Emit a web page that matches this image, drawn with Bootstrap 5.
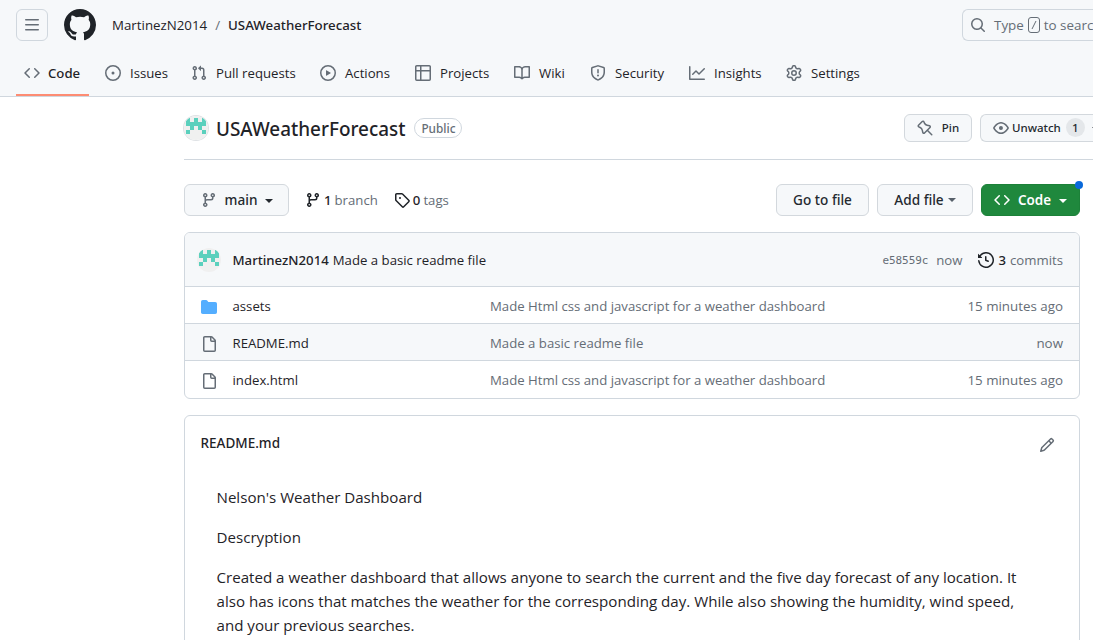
<!DOCTYPE html>
<html lang="en">
<head>
<meta charset="utf-8">
<meta name="viewport" content="width=device-width, initial-scale=1">
<title>MartinezN2014/USAWeatherForecast</title>
<link href="https://cdn.jsdelivr.net/npm/bootstrap@5.3.0/dist/css/bootstrap.min.css" rel="stylesheet">
<style>
  :root { --ink: #1f2328; --soft: #656d76; --line: #d0d7de; --canvas: #f6f8fa; }
  body { font-family: "Open Sans", "Noto Sans", sans-serif; font-size: 13.2px; line-height: 20px; color: var(--ink); height: 640px; overflow: hidden; }
  .oct { width: 16px; height: 16px; fill: currentColor; flex: none; display: block; }
  .soft { color: var(--soft); }
  .semi { font-family: "Noto Sans", sans-serif; font-weight: 500; }
  .line { border-color: var(--line) !important; }
  .canvas { background: var(--canvas); }

  .app-top { height: 97px; }
  .app-bar { height: 49px; padding: 9px 0 8px 16px; }
  .sq-btn { width: 32px; height: 32px; border-radius: 6px; }
  .crumb { font-size: 13.3px; }
  .search-box { width: 131px; height: 32px; padding-left: 7px; border-radius: 6px 0 0 6px; font-size: 13.4px; white-space: nowrap; overflow: hidden; }
  .slash { width: 12px; height: 16px; border: 1px solid var(--soft); border-radius: 3px; margin: 0 4px 0 4px; flex: none; }

  .repo-tabs { height: 47px; padding-left: 16px; gap: 8px; }
  .repo-tabs .nav-item { height: 47px; }
  .repo-tabs .nav-link { height: 47px; padding: 0 8px; gap: 9px; color: var(--ink); white-space: nowrap; }
  .repo-tabs .oct { color: var(--soft); }
  .repo-tabs .active { box-shadow: inset 0 -2px #fd8c73; border-radius: 0; gap: 8px; }
  .repo-tabs li:nth-child(1) { width: 73px; }
  .repo-tabs li:nth-child(2) { width: 78px; }
  .repo-tabs li:nth-child(3) { width: 121px; }
  .repo-tabs li:nth-child(4) { width: 87px; }
  .repo-tabs li:nth-child(5) { width: 91px; }
  .repo-tabs li:nth-child(6) { width: 68px; }
  .repo-tabs li:nth-child(7) { width: 91px; }
  .repo-tabs li:nth-child(8) { width: 89px; }

  .page { margin-left: 184px; }
  .repo-head { height: 63px; padding-bottom: 1px; }
  .repo-name { font-size: 18.9px; line-height: 30px; margin: 2px 0 0 8px; }
  .pill { height: 20px; line-height: 18px; font-size: 11.8px; padding: 0 6px; margin-left: 9px; border-radius: 10px; margin-top: 1px; }
  .face { width: 24px; height: 24px; border-radius: 50%; flex: none; display: block; }
  .ringed { box-shadow: 0 0 0 1px #dfe2e5; }
  .gh-btn { --bs-btn-color: #24292f; --bs-btn-bg: #f6f8fa; --bs-btn-border-color: #d3d8dd; --bs-btn-border-radius: 6px; --bs-btn-padding-y: 0; --bs-btn-padding-x: 0;
    --bs-btn-font-size: 13.6px; --bs-btn-line-height: 20px; height: 32px; display: flex; align-items: center; justify-content: center; white-space: nowrap; font-family: "Noto Sans", sans-serif; font-weight: 500; flex: none; }
  .gh-btn-sm { --bs-btn-font-size: 11.5px; height: 28px; }
  .w-pin { width: 68px; gap: 9px; }
  .w-watch { width: 113px; justify-content: flex-start; padding-left: 12px; margin-left: 8px; border-right: 0; border-radius: 6px 0 0 6px; overflow: hidden; }
  .w-watch .oct { margin-right: 3px; }
  .count { width: 19px; height: 19px; line-height: 19px; border-radius: 50%; background: #e4e7ea; margin-left: 5px; flex: none; }
  .tri { width: 0; height: 0; border: 4.5px solid transparent; border-top-color: currentColor; border-bottom: 0; margin-top: 2px; flex: none; }
  .w-watch .tri { margin-left: 7px; }
  .w-main { width: 105px; gap: 7.5px; color: #24292f; padding-left: 1px; }
  .w-goto { width: 93px; margin-left: auto; }
  .w-add { width: 96px; gap: 4px; margin-left: 8px; }
  .w-add .tri { margin-top: 0; border-top-color: #57606a; }
  .w-code { --bs-btn-bg: #1f883d; --bs-btn-color: #fff; --bs-btn-border-color: #1c8139; width: 99px; gap: 7.5px; margin-left: 8px; font-weight: 600; font-size: 13.4px; }
  .dot { width: 8px; height: 8px; border-radius: 50%; background: #0969da; top: -4px; right: -4px; }

  .tool-row { height: 32px; margin-top: 24px; }
  .refs { gap: 3px; margin-top: -1px; }
  .col-wide { width: 896px; }
  .box { border: 1px solid var(--line); border-radius: 6px; overflow: hidden; background: #fff; }
  .commit-row { height: 53px; padding: 0 16px 0 12px; }
  .author { margin-left: 11.5px; }
  .file-row { height: 37px; border-top: 1px solid var(--line); padding: 2px 16px 0; }
  .file-row:last-child { height: 38px; padding-bottom: 1px; }
  .file-row .oct { margin-top: 1px; }
  .file-row .fname { width: 257.5px; margin-left: 15.5px; }
  .sha { font-family: "DejaVu Sans Mono", monospace; font-size: 11px; letter-spacing: -.1px; margin-top: 2px; }
  .ago { font-size: 13.35px; }
  .readme-head { height: 54px; padding: 0 24px 0 15.5px; }
  .readme-head .semi { font-size: 13.5px; }
  .prose { font-size: 15.12px; line-height: 24px; padding: 15px 31.5px; white-space: nowrap; }
  .prose p { margin: 0 0 16px; }
</style>
</head>
<body>
<svg class="d-none">
  <symbol id="code" viewBox="0 0 16 16"><path d="m11.28 3.22 4.25 4.25a.75.75 0 0 1 0 1.06l-4.25 4.25a.749.749 0 0 1-1.275-.326.749.749 0 0 1 .215-.734L13.94 8l-3.72-3.72a.749.749 0 0 1 .326-1.275.749.749 0 0 1 .734.215Zm-6.56 0a.751.751 0 0 1 1.042.018.751.751 0 0 1 .018 1.042L2.06 8l3.72 3.72a.749.749 0 0 1-.326 1.275.749.749 0 0 1-.734-.215L.47 8.53a.75.75 0 0 1 0-1.06Z"/></symbol>
  <symbol id="branch" viewBox="0 0 16 16"><path d="M9.5 3.25a2.25 2.25 0 1 1 3 2.122V6A2.5 2.5 0 0 1 10 8.5H6a1 1 0 0 0-1 1v1.128a2.251 2.251 0 1 1-1.5 0V5.372a2.25 2.25 0 1 1 1.5 0v1.836A2.493 2.493 0 0 1 6 7h4a1 1 0 0 0 1-1v-.628A2.25 2.25 0 0 1 9.5 3.25Zm-6 0a.75.75 0 1 0 1.5 0 .75.75 0 0 0-1.5 0Zm8.25-.75a.75.75 0 1 0 0 1.5.75.75 0 0 0 0-1.5ZM4.25 12a.75.75 0 1 0 0 1.5.75.75 0 0 0 0-1.5Z"/></symbol>
  <symbol id="file" viewBox="0 0 16 16"><path d="M2 1.75C2 .784 2.784 0 3.75 0h6.586c.464 0 .909.184 1.237.513l2.914 2.914c.329.328.513.773.513 1.237v9.586A1.75 1.75 0 0 1 13.25 16h-9.5A1.75 1.75 0 0 1 2 14.25Zm1.75-.25a.25.25 0 0 0-.25.25v12.5c0 .138.112.25.25.25h9.5a.25.25 0 0 0 .25-.25V6h-2.75A1.75 1.75 0 0 1 9 4.25V1.5Zm6.75.062V4.25c0 .138.112.25.25.25h2.688l-.011-.013-2.914-2.914-.013-.011Z"/></symbol>
  <symbol id="face" viewBox="0 0 24 24"><rect width="24" height="24" fill="#f0f0f0"/><path fill="#5bd0bd" d="M2 2h4v4h4V2h4v4h4V2h4v8h-4v4h-4v-4h-4v4H6v-4H2ZM2 14h4v4H2ZM18 14h4v4h-4Z"/></symbol>
</svg>

<header class="app-top canvas border-bottom line">
  <div class="app-bar d-flex align-items-center">
    <div class="sq-btn border line d-flex align-items-center justify-content-center flex-shrink-0 soft"><svg class="oct" viewBox="0 0 16 16"><path d="M1 2.75A.75.75 0 0 1 1.75 2h12.5a.75.75 0 0 1 0 1.5H1.75A.75.75 0 0 1 1 2.75Zm0 5A.75.75 0 0 1 1.75 7h12.5a.75.75 0 0 1 0 1.5H1.75A.75.75 0 0 1 1 7.75ZM1.75 12h12.5a.75.75 0 0 1 0 1.5H1.75a.75.75 0 0 1 0-1.5Z"/></svg></div>
    <svg class="flex-shrink-0 ms-3 me-3" width="32" height="32" viewBox="0 0 16 16" fill="#1f2328"><path d="M8 0c4.42 0 8 3.58 8 8a8.013 8.013 0 0 1-5.45 7.59c-.4.08-.55-.17-.55-.38 0-.27.01-1.13.01-2.2 0-.75-.25-1.23-.54-1.48 1.78-.2 3.65-.88 3.65-3.95 0-.88-.31-1.59-.82-2.15.08-.2.36-1.02-.08-2.12 0 0-.67-.22-2.2.82-.64-.18-1.32-.27-2-.27-.68 0-1.36.09-2 .27-1.53-1.03-2.2-.82-2.2-.82-.44 1.1-.16 1.92-.08 2.12-.51.56-.82 1.28-.82 2.15 0 3.06 1.86 3.75 3.64 3.95-.23.2-.44.55-.51 1.07-.46.21-1.61.55-2.33-.66-.15-.24-.6-.83-1.23-.82-.67.01-.27.38.01.53.34.19.73.9.82 1.13.16.45.68 1.31 2.69.94 0 .67.01 1.3.01 1.49 0 .21-.15.45-.55.38A7.995 7.995 0 0 1 0 8c0-4.42 3.58-8 8-8Z"/></svg>
    <div class="crumb d-flex"><span>MartinezN2014</span><span class="soft px-2">/</span><span class="semi">USAWeatherForecast</span></div>
    <div class="search-box border border-end-0 line d-flex align-items-center soft flex-shrink-0 ms-auto"><svg class="oct" viewBox="0 0 16 16"><path d="M10.68 11.74a6 6 0 0 1-7.922-8.982 6 6 0 0 1 8.982 7.922l3.04 3.04a.749.749 0 0 1-.326 1.275.749.749 0 0 1-.734-.215ZM11.5 7a4.499 4.499 0 1 0-8.997 0A4.499 4.499 0 0 0 11.5 7Z"/></svg><span class="ms-2">Type</span><svg class="slash" viewBox="0 0 10 14"><path d="M3 11 7 3" stroke="#656d76" fill="none"/></svg><span>to search</span></div>
  </div>
  <ul class="nav repo-tabs flex-nowrap">
    <li class="nav-item"><a class="nav-link active d-flex align-items-center semi"><svg class="oct"><use href="#code"/></svg>Code</a></li>
    <li class="nav-item"><a class="nav-link d-flex align-items-center"><svg class="oct" viewBox="0 0 16 16"><path d="M8 9.5a1.5 1.5 0 1 0 0-3 1.5 1.5 0 0 0 0 3Z"/><path d="M8 0a8 8 0 1 1 0 16A8 8 0 0 1 8 0ZM1.5 8a6.5 6.5 0 1 0 13 0 6.5 6.5 0 0 0-13 0Z"/></svg>Issues</a></li>
    <li class="nav-item"><a class="nav-link d-flex align-items-center"><svg class="oct" viewBox="0 0 16 16"><path d="M1.5 3.25a2.25 2.25 0 1 1 3 2.122v5.256a2.251 2.251 0 1 1-1.5 0V5.372A2.25 2.25 0 0 1 1.5 3.25Zm5.677-.177L9.573.677A.25.25 0 0 1 10 .854V2.5h1A2.5 2.5 0 0 1 13.5 5v5.628a2.251 2.251 0 1 1-1.5 0V5a1 1 0 0 0-1-1h-1v1.646a.25.25 0 0 1-.427.177L7.177 3.427a.25.25 0 0 1 0-.354ZM3.75 2.5a.75.75 0 1 0 0 1.5.75.75 0 0 0 0-1.5Zm0 9.5a.75.75 0 1 0 0 1.5.75.75 0 0 0 0-1.5Zm8.25.75a.75.75 0 1 0 1.5 0 .75.75 0 0 0-1.5 0Z"/></svg>Pull requests</a></li>
    <li class="nav-item"><a class="nav-link d-flex align-items-center"><svg class="oct" viewBox="0 0 16 16"><path d="M8 0a8 8 0 1 1 0 16A8 8 0 0 1 8 0ZM1.5 8a6.5 6.5 0 1 0 13 0 6.5 6.5 0 0 0-13 0Zm4.879-2.773 4.264 2.559a.25.25 0 0 1 0 .428l-4.264 2.559A.25.25 0 0 1 6 10.559V5.442a.25.25 0 0 1 .379-.215Z"/></svg>Actions</a></li>
    <li class="nav-item"><a class="nav-link d-flex align-items-center"><svg class="oct" viewBox="0 0 16 16"><path d="M0 1.75C0 .784.784 0 1.75 0h12.5C15.216 0 16 .784 16 1.75v12.5A1.75 1.75 0 0 1 14.25 16H1.75A1.75 1.75 0 0 1 0 14.25ZM6.5 6.5v8h7.75a.25.25 0 0 0 .25-.25V6.5Zm8-1.5V1.75a.25.25 0 0 0-.25-.25H6.5V5Zm-13 1.5v7.75c0 .138.112.25.25.25H5v-8ZM5 5V1.5H1.75a.25.25 0 0 0-.25.25V5Z"/></svg>Projects</a></li>
    <li class="nav-item"><a class="nav-link d-flex align-items-center"><svg class="oct" viewBox="0 0 16 16"><path d="M0 1.75A.75.75 0 0 1 .75 1h4.253c1.227 0 2.317.59 3 1.501A3.743 3.743 0 0 1 11.006 1h4.245a.75.75 0 0 1 .75.75v10.5a.75.75 0 0 1-.75.75h-4.507a2.25 2.25 0 0 0-1.591.659l-.622.621a.75.75 0 0 1-1.06 0l-.622-.621A2.25 2.25 0 0 0 5.258 13H.75a.75.75 0 0 1-.75-.75Zm7.251 10.324.004-5.073-.002-2.253A2.25 2.25 0 0 0 5.003 2.5H1.5v9h3.757a3.75 3.75 0 0 1 1.994.574ZM8.755 4.75l-.004 7.322a3.752 3.752 0 0 1 1.992-.572H14.5v-9h-3.495a2.25 2.25 0 0 0-2.25 2.25Z"/></svg>Wiki</a></li>
    <li class="nav-item"><a class="nav-link d-flex align-items-center"><svg class="oct" viewBox="0 0 16 16"><path d="M7.467.133a1.748 1.748 0 0 1 1.066 0l5.25 1.68A1.75 1.75 0 0 1 15 3.48V7c0 1.566-.32 3.182-1.303 4.682-.983 1.498-2.585 2.813-5.032 3.855a1.697 1.697 0 0 1-1.33 0c-2.447-1.042-4.049-2.357-5.032-3.855C1.32 10.182 1 8.566 1 7V3.48a1.755 1.755 0 0 1 1.217-1.667Zm.61 1.429a.25.25 0 0 0-.153 0l-5.25 1.68a.25.25 0 0 0-.174.238V7c0 1.358.275 2.666 1.057 3.86.784 1.194 2.121 2.34 4.366 3.297a.196.196 0 0 0 .154 0c2.245-.956 3.582-2.104 4.366-3.298C13.225 9.666 13.5 8.36 13.5 7V3.48a.251.251 0 0 0-.174-.237l-5.25-1.68ZM8.75 4.75v3a.75.75 0 0 1-1.5 0v-3a.75.75 0 0 1 1.5 0ZM9 10.5a1 1 0 1 1-2 0 1 1 0 0 1 2 0Z"/></svg>Security</a></li>
    <li class="nav-item"><a class="nav-link d-flex align-items-center"><svg class="oct" viewBox="0 0 16 16"><path d="M1.5 1.75V13.5h13.75a.75.75 0 0 1 0 1.5H.75a.75.75 0 0 1-.75-.75V1.75a.75.75 0 0 1 1.5 0Zm14.28 2.53-5.25 5.25a.75.75 0 0 1-1.06 0L7 7.06 4.28 9.78a.751.751 0 0 1-1.042-.018.751.751 0 0 1-.018-1.042l3.25-3.25a.75.75 0 0 1 1.06 0L10 7.94l4.72-4.72a.751.751 0 0 1 1.042.018.751.751 0 0 1 .018 1.042Z"/></svg>Insights</a></li>
    <li class="nav-item"><a class="nav-link d-flex align-items-center"><svg class="oct" viewBox="0 0 16 16"><path d="M8 0a8.2 8.2 0 0 1 .701.031C9.444.095 9.99.645 10.16 1.29l.288 1.107c.018.066.079.158.212.224.231.114.454.243.668.386.123.082.233.09.299.071l1.103-.303c.644-.176 1.392.021 1.82.63.27.385.506.792.704 1.218.315.675.111 1.422-.364 1.891l-.814.806c-.049.048-.098.147-.088.294.016.257.016.515 0 .772-.01.147.038.246.088.294l.814.806c.475.469.679 1.216.364 1.891a7.977 7.977 0 0 1-.704 1.217c-.428.61-1.176.807-1.82.63l-1.102-.302c-.067-.019-.177-.011-.3.071a5.909 5.909 0 0 1-.668.386c-.133.066-.194.158-.211.224l-.29 1.106c-.168.646-.715 1.196-1.458 1.26a8.006 8.006 0 0 1-1.402 0c-.743-.064-1.289-.614-1.458-1.26l-.289-1.106c-.018-.066-.079-.158-.212-.224a5.738 5.738 0 0 1-.668-.386c-.123-.082-.233-.09-.299-.071l-1.103.303c-.644.176-1.392-.021-1.82-.63a8.12 8.12 0 0 1-.704-1.218c-.315-.675-.111-1.422.363-1.891l.815-.806c.05-.048.098-.147.088-.294a6.214 6.214 0 0 1 0-.772c.01-.147-.038-.246-.088-.294l-.815-.806C.635 6.045.431 5.298.746 4.623a7.92 7.92 0 0 1 .704-1.217c.428-.61 1.176-.807 1.82-.63l1.102.302c.067.019.177.011.3-.071.214-.143.437-.272.668-.386.133-.066.194-.158.211-.224l.29-1.106C6.009.645 6.556.095 7.299.03 7.53.01 7.764 0 8 0Zm-.571 1.525c-.036.003-.108.036-.137.146l-.289 1.105c-.147.561-.549.967-.998 1.189-.173.086-.34.183-.5.29-.417.278-.97.423-1.529.27l-1.103-.303c-.109-.03-.175.016-.195.045-.22.312-.412.644-.573.99-.014.031-.021.11.059.19l.815.806c.411.406.562.957.53 1.456a4.709 4.709 0 0 0 0 .582c.032.499-.119 1.05-.53 1.456l-.815.806c-.081.08-.073.159-.059.19.162.346.353.677.573.989.02.03.085.076.195.046l1.102-.303c.56-.153 1.113-.008 1.53.27.161.107.328.204.501.29.447.222.85.629.997 1.189l.289 1.105c.029.109.101.143.137.146a6.6 6.6 0 0 0 1.142 0c.036-.003.108-.036.137-.146l.289-1.105c.147-.561.549-.967.998-1.189.173-.086.34-.183.5-.29.417-.278.97-.423 1.529-.27l1.103.303c.109.029.175-.016.195-.045.22-.313.411-.644.573-.99.014-.031.021-.11-.059-.19l-.815-.806c-.411-.406-.562-.957-.53-1.456a4.709 4.709 0 0 0 0-.582c-.032-.499.119-1.05.53-1.456l.815-.806c.081-.08.073-.159.059-.19a6.464 6.464 0 0 0-.573-.989c-.02-.03-.085-.076-.195-.046l-1.102.303c-.56.153-1.113.008-1.53-.27a4.44 4.44 0 0 0-.501-.29c-.447-.222-.85-.629-.997-1.189l-.289-1.105c-.029-.11-.101-.143-.137-.146a6.6 6.6 0 0 0-1.142 0ZM11 8a3 3 0 1 1-6 0 3 3 0 0 1 6 0ZM9.5 8a1.5 1.5 0 1 0-3.001.001A1.5 1.5 0 0 0 9.5 8Z"/></svg>Settings</a></li>
  </ul>
</header>

<main class="page">
  <div class="repo-head border-bottom line d-flex align-items-center">
    <svg class="face ringed"><use href="#face"/></svg>
    <h1 class="repo-name semi">USAWeatherForecast</h1>
    <span class="pill border line soft semi">Public</span>
    <div class="d-flex ms-auto">
      <button class="btn gh-btn gh-btn-sm w-pin"><svg class="oct soft" viewBox="0 0 16 16"><path transform="matrix(-1 0 0 1 16 0)" d="m11.294.984 3.722 3.722a1.75 1.75 0 0 1-.504 2.826l-1.327.613a3.089 3.089 0 0 0-1.707 2.084l-.584 2.454c-.317 1.332-1.972 1.8-2.94.832L5.75 11.311 1.78 15.28a.749.749 0 1 1-1.06-1.06l3.969-3.97-2.204-2.204c-.968-.968-.5-2.623.832-2.94l2.454-.584a3.08 3.08 0 0 0 2.084-1.707l.613-1.327a1.75 1.75 0 0 1 2.826-.504ZM6.283 9.723l2.732 2.731a.25.25 0 0 0 .42-.119l.584-2.454a4.586 4.586 0 0 1 2.537-3.098l1.328-.613a.25.25 0 0 0 .072-.404l-3.722-3.722a.25.25 0 0 0-.404.072l-.613 1.328a4.584 4.584 0 0 1-3.098 2.537l-2.454.584a.25.25 0 0 0-.119.42l2.731 2.732Z"/></svg>Pin</button>
      <button class="btn gh-btn gh-btn-sm w-watch"><svg class="oct soft" viewBox="0 0 16 16"><path d="M8 2c1.981 0 3.671.992 4.933 2.078 1.27 1.091 2.187 2.345 2.637 3.023a1.62 1.62 0 0 1 0 1.798c-.45.678-1.367 1.932-2.637 3.023C11.67 13.008 9.981 14 8 14c-1.981 0-3.671-.992-4.933-2.078C1.797 10.83.88 9.576.43 8.898a1.62 1.62 0 0 1 0-1.798c.45-.677 1.367-1.931 2.637-3.022C4.33 2.992 6.019 2 8 2ZM1.679 7.932a.12.12 0 0 0 0 .136c.411.622 1.241 1.75 2.366 2.717C5.176 11.758 6.527 12.5 8 12.5c1.473 0 2.825-.742 3.955-1.715 1.124-.967 1.954-2.096 2.366-2.717a.12.12 0 0 0 0-.136c-.412-.621-1.242-1.75-2.366-2.717C10.824 4.242 9.473 3.5 8 3.5c-1.473 0-2.825.742-3.955 1.715-1.124.967-1.954 2.096-2.366 2.717ZM8 10a2 2 0 1 1-.001-3.999A2 2 0 0 1 8 10Z"/></svg>Unwatch<span class="count">1</span><span class="tri"></span></button>
    </div>
  </div>

  <div class="col-wide">
    <div class="tool-row d-flex align-items-center">
      <button class="btn gh-btn w-main"><svg class="oct soft"><use href="#branch"/></svg>main<span class="tri"></span></button>
      <div class="refs d-flex align-items-center ms-3"><svg class="oct"><use href="#branch"/></svg><span class="semi">1</span><span class="soft">branch</span></div>
      <div class="refs d-flex align-items-center ms-3"><svg class="oct" viewBox="0 0 16 16"><path d="M1 7.775V2.75C1 1.784 1.784 1 2.75 1h5.025c.464 0 .91.184 1.238.513l6.25 6.25a1.75 1.75 0 0 1 0 2.474l-5.026 5.026a1.75 1.75 0 0 1-2.474 0l-6.25-6.25A1.752 1.752 0 0 1 1 7.775Zm1.5 0c0 .066.026.13.073.177l6.25 6.25a.25.25 0 0 0 .354 0l5.025-5.025a.25.25 0 0 0 0-.354l-6.25-6.25a.25.25 0 0 0-.177-.073H2.75a.25.25 0 0 0-.25.25ZM6 5a1 1 0 1 1 0 2 1 1 0 0 1 0-2Z"/></svg><span class="semi">0</span><span class="soft">tags</span></div>
      <button class="btn gh-btn w-goto">Go to file</button>
      <button class="btn gh-btn w-add">Add file<span class="tri"></span></button>
      <button class="btn gh-btn w-code position-relative"><svg class="oct"><use href="#code"/></svg>Code<span class="tri"></span><span class="dot position-absolute"></span></button>
    </div>

    <section class="box mt-3">
      <div class="commit-row canvas d-flex align-items-center">
        <svg class="face"><use href="#face"/></svg>
        <span class="semi me-1 author">MartinezN2014</span><span>Made a basic readme file</span>
        <span class="sha soft ms-auto">e58559c</span><span class="soft ms-2">now</span>
        <svg class="oct ms-3" viewBox="0 0 16 16"><path d="m.427 1.927 1.215 1.215a8.002 8.002 0 1 1-1.6 5.685.75.75 0 1 1 1.493-.154 6.5 6.5 0 1 0 1.18-4.458l1.358 1.358A.25.25 0 0 1 3.896 6H.25A.25.25 0 0 1 0 5.75V2.104a.25.25 0 0 1 .427-.177ZM7.75 4a.75.75 0 0 1 .75.75v2.992l2.028.812a.75.75 0 0 1-.557 1.392l-2.5-1A.751.751 0 0 1 7 8.25v-3.5A.75.75 0 0 1 7.75 4Z"/></svg><span class="semi ms-1 me-1">3</span><span class="soft">commits</span>
      </div>
      <div class="file-row d-flex align-items-center"><svg class="oct" viewBox="0 0 16 16"><path fill="#54aeff" d="M1.75 1A1.75 1.75 0 0 0 0 2.75v10.5C0 14.216.784 15 1.75 15h12.5A1.75 1.75 0 0 0 16 13.25v-8.5A1.75 1.75 0 0 0 14.25 3H7.5a.25.25 0 0 1-.2-.1l-.9-1.2C6.07 1.26 5.55 1 5 1H1.75Z"/></svg><span class="fname">assets</span><span class="soft">Made Html css and javascript for a weather dashboard</span><span class="soft ago ms-auto">15 minutes ago</span></div>
      <div class="file-row canvas d-flex align-items-center"><svg class="oct soft"><use href="#file"/></svg><span class="fname">README.md</span><span class="soft">Made a basic readme file</span><span class="soft ago ms-auto">now</span></div>
      <div class="file-row d-flex align-items-center"><svg class="oct soft"><use href="#file"/></svg><span class="fname">index.html</span><span class="soft">Made Html css and javascript for a weather dashboard</span><span class="soft ago ms-auto">15 minutes ago</span></div>
    </section>

    <section class="box mt-3">
      <div class="readme-head d-flex align-items-center justify-content-between"><span class="semi">README.md</span><svg class="oct soft mt-1" viewBox="0 0 16 16"><path d="M11.013 1.427a1.75 1.75 0 0 1 2.474 0l1.086 1.086a1.75 1.75 0 0 1 0 2.474l-8.61 8.61c-.21.21-.47.364-.756.445l-3.251.93a.75.75 0 0 1-.927-.928l.929-3.25c.081-.286.235-.547.445-.758l8.61-8.61Zm.176 4.823L9.75 4.81l-6.286 6.287a.253.253 0 0 0-.064.108l-.558 1.953 1.953-.558a.253.253 0 0 0 .108-.064Zm1.238-3.763a.25.25 0 0 0-.354 0L10.811 3.75l1.439 1.44 1.263-1.263a.25.25 0 0 0 0-.354Z"/></svg></div>
      <div class="prose">
        <p>Nelson's Weather Dashboard</p>
        <p>Descryption</p>
        <p>Created a weather dashboard that allows anyone to search the current and the five day forecast of any location. It<br>also has icons that matches the weather for the corresponding day. While also showing the humidity, wind speed,<br>and your previous searches.</p>
      </div>
    </section>
  </div>
</main>
<script src="https://cdn.jsdelivr.net/npm/bootstrap@5.3.0/dist/js/bootstrap.bundle.min.js"></script>
</body>
</html>
